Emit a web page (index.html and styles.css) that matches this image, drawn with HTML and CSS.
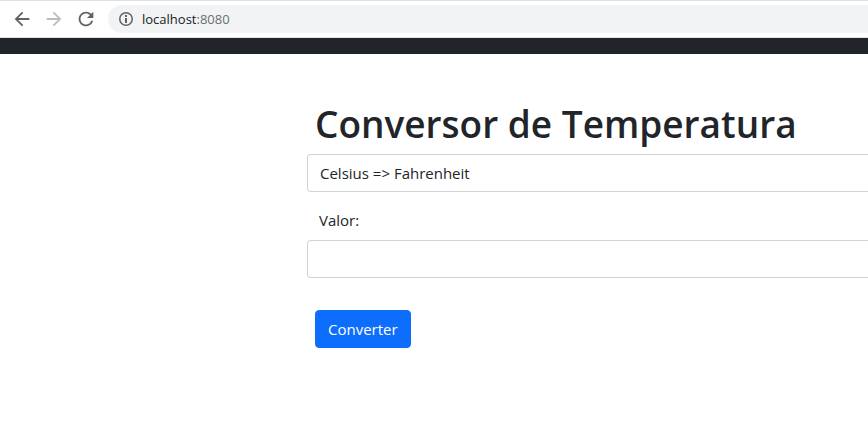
FILE: index.html
```html
<!DOCTYPE html>
<html lang="pt-BR">
<head>
<meta charset="utf-8">
<title>Conversor de Temperatura</title>
<link rel="stylesheet" href="styles.css">
</head>
<body>
<header class="toolbar">
  <button class="tool" type="button" aria-label="Voltar"><svg viewBox="0 0 24 24"><path d="M20 11H7.83l5.59-5.59L12 4l-8 8 8 8 1.41-1.41L7.83 13H20v-2z"/></svg></button>
  <button class="tool tool-off" type="button" aria-label="Avançar" disabled><svg viewBox="0 0 24 24"><path d="M12 4l-1.41 1.41L16.17 11H4v2h12.17l-5.58 5.59L12 20l8-8z"/></svg></button>
  <button class="tool" type="button" aria-label="Recarregar"><svg viewBox="0 0 24 24"><path d="M17.65 6.35C16.2 4.9 14.21 4 12 4c-4.42 0-7.99 3.58-7.99 8s3.57 8 7.99 8c3.73 0 6.84-2.55 7.73-6h-2.08c-.82 2.33-3.04 4-5.65 4-3.31 0-6-2.69-6-6s2.69-6 6-6c1.66 0 3.14.69 4.22 1.78L13 11h7V4l-2.35 2.35z"/></svg></button>
  <div class="address">
    <svg class="info" viewBox="0 0 16 16"><circle cx="8" cy="8" r="6.25" fill="none" stroke="currentColor" stroke-width="1.5"/><path d="M7 4h2v2H7zM7 7h2v5H7z"/></svg>
    <span>localhost<span class="port">:8080</span></span>
  </div>
</header>
<div class="navbar"></div>
<main class="page">
  <form class="converter">
    <h1 class="title">Conversor de Temperatura</h1>
    <select class="control" aria-label="Conversão">
      <option>Celsius =&gt; Fahrenheit</option>
      <option>Fahrenheit =&gt; Celsius</option>
    </select>
    <label class="label" for="valor">Valor:</label>
    <input class="control" id="valor" type="text">
    <button class="submit" type="button">Converter</button>
  </form>
</main>
</body>
</html>
```
FILE: styles.css
```css
* {
  box-sizing: border-box;
}

body {
  margin: 0;
  background: #fff;
  color: #212529;
  font: 15px/24px "Open Sans", "Noto Sans", sans-serif;
}

.toolbar {
  display: flex;
  align-items: center;
  gap: 8px;
  height: 38px;
  padding-left: 10px;
  border-top: 1px solid #dee1e6;
  border-bottom: 1px solid #dee1e6;
}

.tool {
  display: flex;
  align-items: center;
  justify-content: center;
  width: 24px;
  height: 24px;
  padding: 0;
  border: 0;
  background: none;
  color: #5f6368;
}

.tool-off {
  color: #babcbe;
}

.tool svg {
  width: 22px;
  height: 22px;
}

svg {
  fill: currentColor;
}

.address {
  display: flex;
  flex: 1;
  align-items: center;
  gap: 8px;
  height: 28px;
  margin-left: 2px;
  padding-left: 10px;
  border-radius: 14px 0 0 14px;
  background: #f1f3f4;
  color: #202124;
  font-size: 13px;
  line-height: 20px;
}

.info {
  width: 16px;
  height: 16px;
  color: #5f6368;
}

.port {
  color: #6b6f73;
}

.navbar {
  height: 16px;
  background: #212529;
}

.page {
  display: grid;
  grid-template-columns: 307px 1fr;
  padding-top: 46px;
}

.converter {
  display: flex;
  flex-direction: column;
  grid-column: 2;
}

.title {
  margin: 0 8px 6px;
  font-size: 37px;
  font-weight: 600;
  line-height: 48px;
  white-space: nowrap;
}

.control {
  width: 100%;
  height: 38px;
  padding: 6px 12px;
  border: 1px solid #ced4da;
  border-right: 0;
  border-radius: 4px 0 0 4px;
  background: #fff;
  color: #212529;
  font: inherit;
  appearance: none;
}

.label {
  margin: 16px 12px 8px;
}

.submit {
  align-self: flex-start;
  height: 38px;
  margin: 32px 8px;
  padding: 6px 12px;
  border: 1px solid #0d6efd;
  border-radius: 4px;
  background: #0d6efd;
  color: #fff;
  font: inherit;
}
```
